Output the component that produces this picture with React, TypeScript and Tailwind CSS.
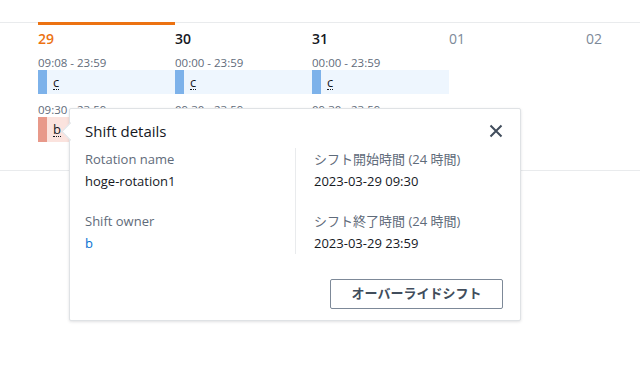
import React from 'react';

const days = [
  { label: '29', active: true, first: '09:08 - 23:59', second: '09:30 - 23:59' },
  { label: '30', bold: true, first: '00:00 - 23:59', second: '09:30 - 23:59' },
  { label: '31', bold: true, first: '00:00 - 23:59', second: '09:30 - 23:59' },
  { label: '01' },
  { label: '02' },
];

const ShiftBar: React.FC<{ name: string; tone: 'blue' | 'red' }> = ({ name, tone }) => (
  <div className={`${tone === 'blue' ? 'bg-[#eef6fe]' : 'bg-[#fbe3de]'} flex h-full items-center`}>
    <div className={`${tone === 'blue' ? 'bg-[#7db2ea]' : 'bg-[#e8998a]'} h-full w-[9px]`} />
    <span className="ml-[6px] border-b border-dotted border-[#16191f] text-[13px] leading-[14px] text-[#16191f]">{name}</span>
  </div>
);

const App: React.FC = () => {
  return (
    <div className="relative h-[387px] w-[640px] overflow-hidden bg-white font-['Open_Sans','Noto_Sans_CJK_JP',sans-serif]">
      <div className="h-[23px] border-b border-[#e9ebed]" />

      <div className="-mt-px grid grid-cols-[137px_137px_137px_137px_137px] pl-[38px]">
        {days.map((d) => (
          <div key={d.label} className="flex flex-col">
            <div className={`${d.active ? 'border-[#ec7211]' : 'border-transparent'} h-[3px] border-t-[3px]`} />
            <div
              className={`${d.active ? 'text-[#ec7211] font-semibold' : d.bold ? 'text-[#16191f] font-semibold' : 'text-[#7d8998]'} mt-[4px] h-[20px] text-[14px] leading-[20px]`}
            >
              {d.label}
            </div>
            <div className="mt-[7px] h-[14px] text-[11.5px] leading-[14px] text-[#5f6b7a]">{d.first ?? ''}</div>
            <div className="h-[24px]">{d.first && <ShiftBar name="c" tone="blue" />}</div>
            <div className="mt-[9px] h-[14px] text-[11.5px] leading-[14px] text-[#5f6b7a]">{d.second ?? ''}</div>
            <div className="h-[25px]">{d.active && <ShiftBar name="b" tone="red" />}</div>
          </div>
        ))}
      </div>

      <div className="mt-[28px] h-px bg-[#e9ebed]" />

      <div className="absolute left-[69px] top-[108px] h-[213px] w-[452px] rounded-[2px] border border-[#dfe2e5] bg-white shadow-[0_1px_3px_rgba(0,7,22,0.12)]">
        <div className="absolute left-[-6px] top-[16px] h-[13px] w-[13px] rotate-45 border-b border-l border-[#dfe2e5] bg-white" />
        <div className="flex items-center justify-between pl-[15px] pr-[16px] pt-[11px]">
          <span className="text-[15px] font-medium leading-[22px] text-[#16191f]">Shift details</span>
          <svg width="16" height="16" viewBox="0 0 16 16" className="text-[#414d5c]">
            <path d="M2.5 2.5l11 11M13.5 2.5l-11 11" stroke="currentColor" strokeWidth="2" fill="none" />
          </svg>
        </div>

        <div className="mt-[6px] grid grid-cols-[211px_1fr] pl-[15px]">
          <div className="flex flex-col border-r border-[#e9ebed] pt-[2px] pb-[2px]">
            <div className="text-[13px] leading-[18px] text-[#5f6b7a]">Rotation name</div>
            <div className="mt-[4px] text-[13px] font-medium leading-[18px] text-[#16191f]">hoge-rotation1</div>
            <div className="mt-[22px] text-[13px] leading-[18px] text-[#5f6b7a]">Shift owner</div>
            <div className="mt-[4px] text-[13px] font-medium leading-[18px] text-[#0972d3]">b</div>
          </div>
          <div className="flex flex-col pl-[18px] pt-[2px]">
            <div className="text-[13px] leading-[18px] text-[#5f6b7a]">シフト開始時間 (24 時間)</div>
            <div className="mt-[4px] text-[13px] font-medium leading-[18px] text-[#16191f]">2023-03-29 09:30</div>
            <div className="mt-[22px] text-[13px] leading-[18px] text-[#5f6b7a]">シフト終了時間 (24 時間)</div>
            <div className="mt-[4px] text-[13px] font-medium leading-[18px] text-[#16191f]">2023-03-29 23:59</div>
          </div>
        </div>

        <div className="mt-[25px] flex justify-end pr-[17px]">
          <button className="h-[30px] w-[173px] rounded-[2px] border border-[#7d8998] text-[13px] font-bold text-[#414d5c]">
            オーバーライドシフト
          </button>
        </div>
      </div>
    </div>
  );
};

export default App;
